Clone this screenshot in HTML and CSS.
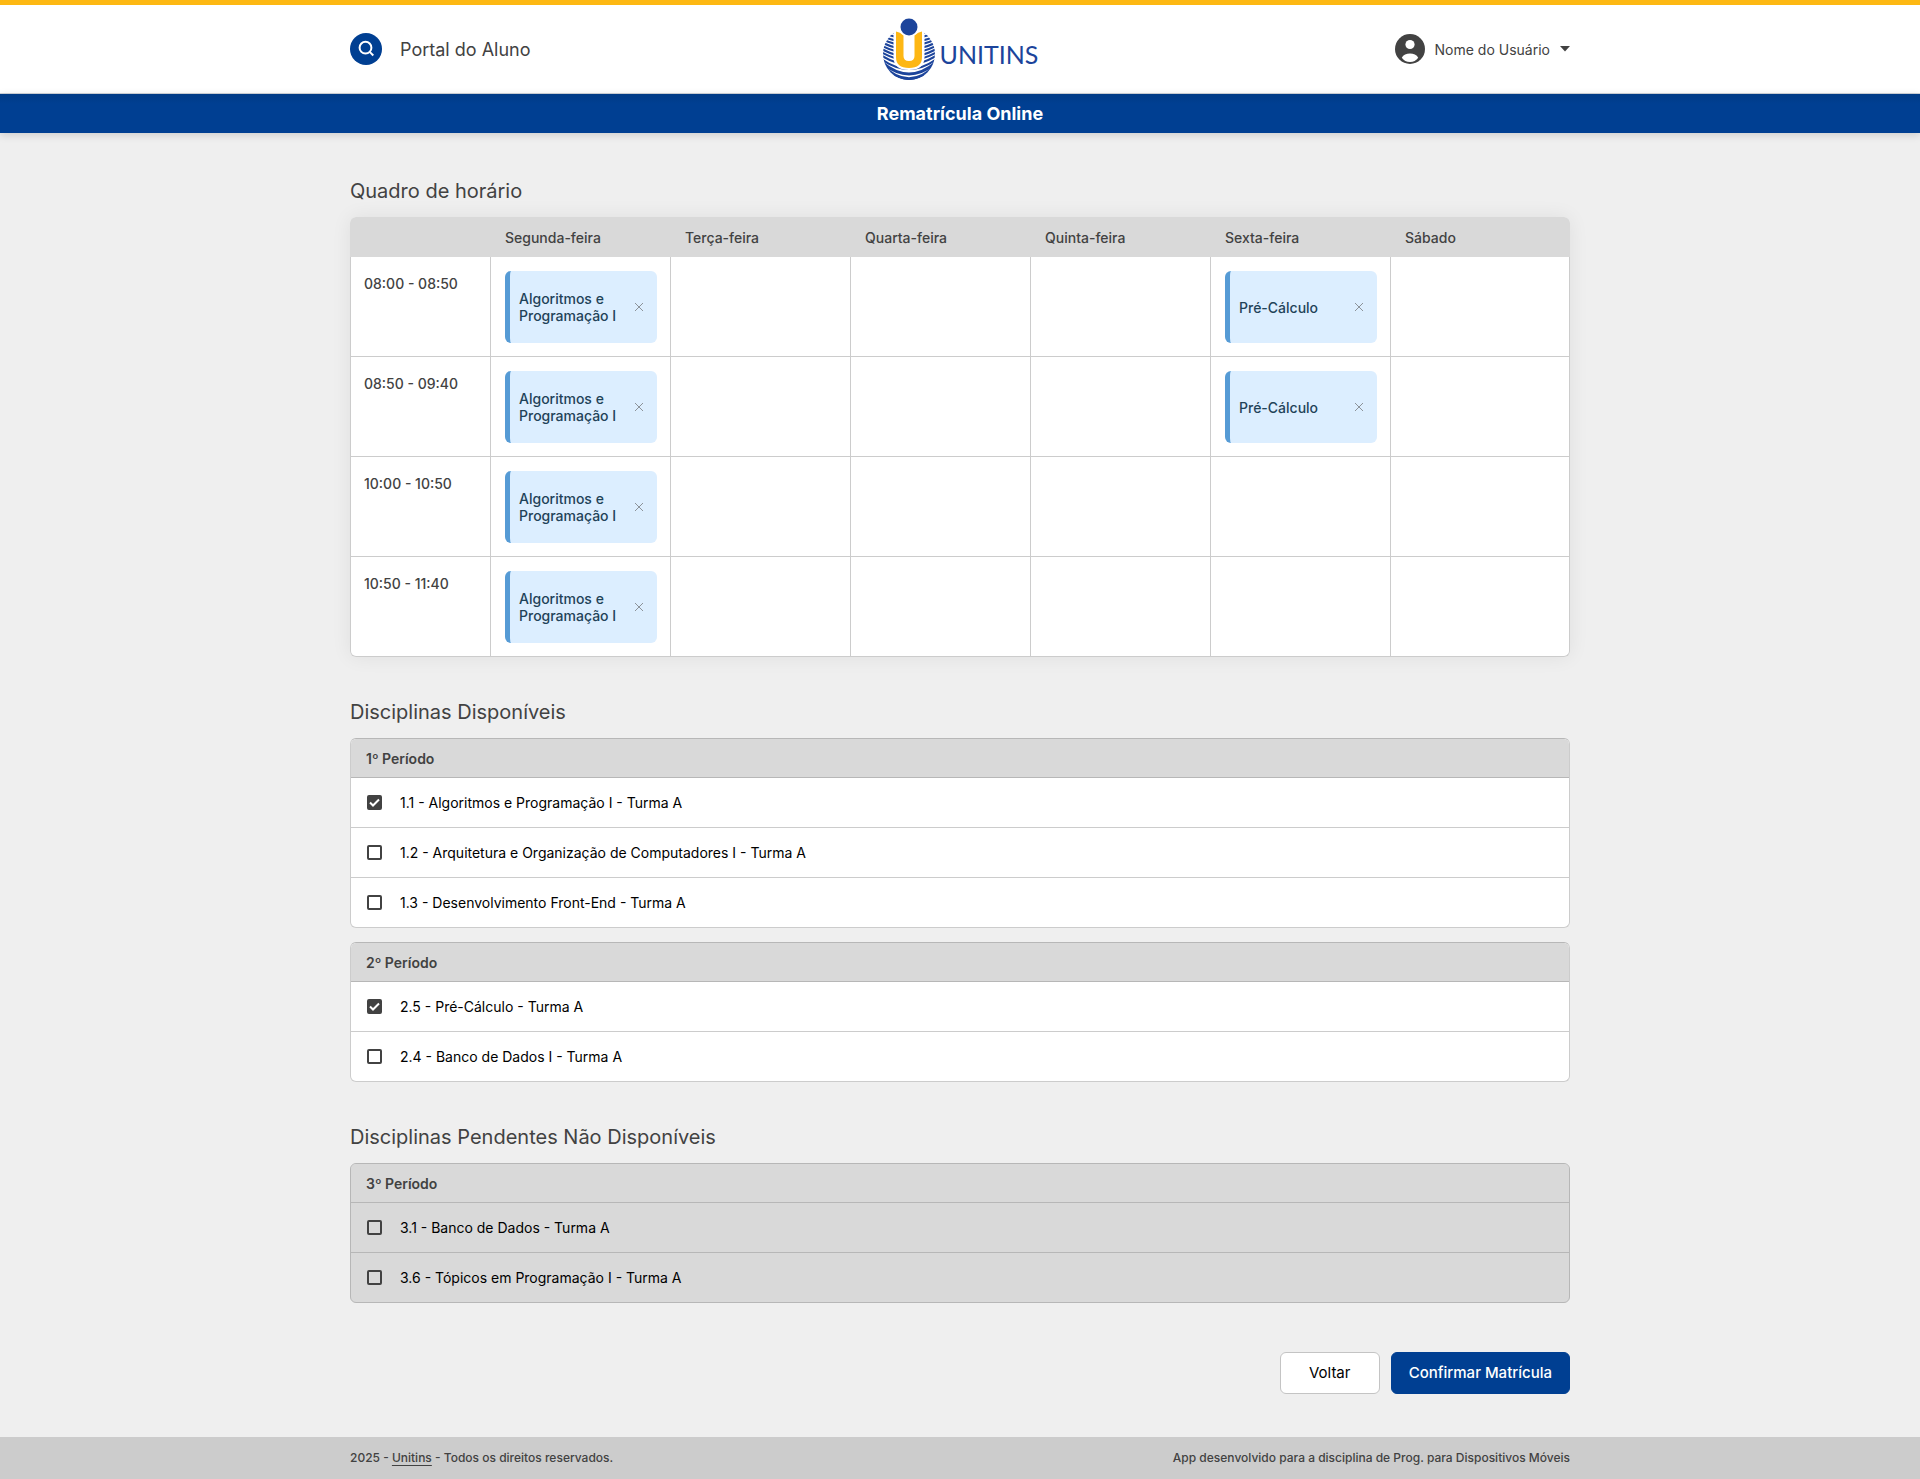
FILE: index.html
```html
<!DOCTYPE html>
<html lang="pt-BR">
<head>
<meta charset="utf-8">
<meta name="viewport" content="width=device-width, initial-scale=1">
<title>Rematrícula Online - Portal do Aluno</title>
<link rel="stylesheet" href="styles.css">
</head>
<body>
<svg class="sprite" aria-hidden="true">
  <symbol id="close" viewBox="0 0 8 8"><path d="M0 0L8 8M8 0L0 8" fill="none" stroke="currentColor"/></symbol>
</svg>

<header class="topbar">
  <div class="container topbar-inner">
    <div class="portal">
      <button class="search" type="button" aria-label="Buscar">
        <svg width="32" height="32" viewBox="0 0 32 32" fill="none" stroke="#fff" stroke-width="2"><circle cx="15.500" cy="14.700" r="5.900"/><path d="M19.700 18.900L23.300 22.500"/></svg>
      </button>
      <span class="portal-name">Portal do Aluno</span>
    </div>
    <a class="logo" href="#" aria-label="Unitins">
      <svg width="54" height="64" viewBox="0 0 54 64">
        <defs><clipPath id="globe"><circle cx="27" cy="36" r="26"/></clipPath></defs>
        <g clip-path="url(#globe)" fill="none" stroke="#1c449b" stroke-width="2.100">
          <path d="M-2 7Q27 19 56 7M-2 10.300Q27 23 56 10.300M-2 13.600Q27 27 56 13.600M-2 16.900Q27 31 56 16.900M-2 20.200Q27 35 56 20.200M-2 23.500Q27 39 56 23.500M-2 26.800Q27 43 56 26.800M-2 30.100Q27 47 56 30.100M-2 33.400Q27 51 56 33.400M-2 36.700Q27 56 56 36.700M-2 40Q27 62 56 40"/>
          <path d="M-2 42.500Q27 69.500 56 42.500M-2 45Q27 76.500 56 45" stroke-width="2.800"/>
          <path d="M4 53Q27 67.500 50 53L48 64H6Z" fill="#1c449b" stroke="none"/>
        </g>
        <path d="M11.500 7V39Q11.500 52 27 52T42.500 39V7Z" fill="#fff"/>
        <path d="M14 13.500Q18 14 21.500 17.500V38Q21.500 43 27 43T32.500 38V17.500Q36 14 40 13.500V39Q40 50 27 50T14 39Z" fill="#fdb714"/>
        <circle cx="27" cy="9" r="10" fill="#fff"/>
        <circle cx="27" cy="9" r="8.500" fill="#1c449b"/>
      </svg>
      <span class="logo-name">UNITINS</span>
    </a>
    <button class="user" type="button">
      <svg width="30" height="30" viewBox="0 0 30 30"><circle cx="15" cy="15" r="15" fill="#424242"/><circle cx="15" cy="10.500" r="4.600" fill="#fff"/><path d="M6.800 23.700C8.200 20.700 11.500 19.600 15 19.600S21.800 20.700 23.200 23.700C21.300 26.400 18.500 28 15 28S8.700 26.400 6.800 23.700Z" fill="#fff"/></svg>
      <span>Nome do Usuário</span>
      <svg width="10" height="6" viewBox="0 0 10 6"><path d="M0 0H10L5 5.500Z" fill="#424242"/></svg>
    </button>
  </div>
</header>
<div class="titlebar"><h1>Rematrícula Online</h1></div>

<main class="container content">
  <section>
    <h2>Quadro de horário</h2>
    <table class="schedule">
      <thead>
        <tr><td></td><th scope="col">Segunda-feira</th><th scope="col">Terça-feira</th><th scope="col">Quarta-feira</th><th scope="col">Quinta-feira</th><th scope="col">Sexta-feira</th><th scope="col">Sábado</th></tr>
      </thead>
      <tbody>
        <tr>
          <th scope="row">08:00 - 08:50</th>
          <td><div class="class-card"><span>Algoritmos e Programação I</span><button type="button" aria-label="Remover"><svg width="8" height="8"><use href="#close"/></svg></button></div></td>
          <td></td><td></td><td></td>
          <td><div class="class-card"><span>Pré-Cálculo</span><button type="button" aria-label="Remover"><svg width="8" height="8"><use href="#close"/></svg></button></div></td>
          <td></td>
        </tr>
        <tr>
          <th scope="row">08:50 - 09:40</th>
          <td><div class="class-card"><span>Algoritmos e Programação I</span><button type="button" aria-label="Remover"><svg width="8" height="8"><use href="#close"/></svg></button></div></td>
          <td></td><td></td><td></td>
          <td><div class="class-card"><span>Pré-Cálculo</span><button type="button" aria-label="Remover"><svg width="8" height="8"><use href="#close"/></svg></button></div></td>
          <td></td>
        </tr>
        <tr>
          <th scope="row">10:00 - 10:50</th>
          <td><div class="class-card"><span>Algoritmos e Programação I</span><button type="button" aria-label="Remover"><svg width="8" height="8"><use href="#close"/></svg></button></div></td>
          <td></td><td></td><td></td><td></td><td></td>
        </tr>
        <tr>
          <th scope="row">10:50 - 11:40</th>
          <td><div class="class-card"><span>Algoritmos e Programação I</span><button type="button" aria-label="Remover"><svg width="8" height="8"><use href="#close"/></svg></button></div></td>
          <td></td><td></td><td></td><td></td><td></td>
        </tr>
      </tbody>
    </table>
  </section>

  <section>
    <h2>Disciplinas Disponíveis</h2>
    <div class="periods">
      <div class="period">
        <h3>1º Período</h3>
        <label><input type="checkbox" checked>1.1 - Algoritmos e Programação I - Turma A</label>
        <label><input type="checkbox">1.2 - Arquitetura e Organização de Computadores I - Turma A</label>
        <label><input type="checkbox">1.3 - Desenvolvimento Front-End - Turma A</label>
      </div>
      <div class="period">
        <h3>2º Período</h3>
        <label><input type="checkbox" checked>2.5 - Pré-Cálculo - Turma A</label>
        <label><input type="checkbox">2.4 - Banco de Dados I - Turma A</label>
      </div>
    </div>
  </section>

  <section>
    <h2>Disciplinas Pendentes Não Disponíveis</h2>
    <div class="periods">
      <div class="period unavailable">
        <h3>3º Período</h3>
        <label><input type="checkbox" disabled>3.1 - Banco de Dados - Turma A</label>
        <label><input type="checkbox" disabled>3.6 - Tópicos em Programação I - Turma A</label>
      </div>
    </div>
  </section>

  <div class="actions">
    <button class="btn" type="button">Voltar</button>
    <button class="btn btn-primary" type="submit">Confirmar Matrícula</button>
  </div>
</main>

<footer class="footer">
  <div class="container footer-inner">
    <span>2025 - <a href="#">Unitins</a> - Todos os direitos reservados.</span>
    <span>App desenvolvido para a disciplina de Prog. para Dispositivos Móveis</span>
  </div>
</footer>
</body>
</html>
```
FILE: styles.css
```css
* { box-sizing: border-box; }

body {
  margin: 0;
  min-height: 100vh;
  display: flex;
  flex-direction: column;
  background: #efefef;
  color: #424242;
  font-family: Inter, "Liberation Sans", sans-serif;
  font-size: 14px;
  line-height: 18px;
}

button {
  font: inherit;
  color: inherit;
  background: none;
  border: 0;
  padding: 0;
  cursor: pointer;
}

h1, h2, h3 { margin: 0; }
svg { display: block; flex: none; }
.sprite { position: absolute; width: 0; height: 0; }

.container {
  width: 100%;
  max-width: 1260px;
  margin: 0 auto;
  padding: 0 20px;
}

/* Header */
.topbar {
  background: #fff;
  border-top: 5px solid #fdb813;
  border-bottom: 1px solid #d0d4da;
}
.topbar-inner {
  display: grid;
  grid-template-columns: 1fr auto 1fr;
  align-items: center;
  height: 88px;
}
.portal { display: flex; align-items: center; gap: 18px; }
.search { border-radius: 50%; background: #003f92; }
.portal-name { padding-top: 2px; font-size: 18px; line-height: 24px; }
.logo {
  display: flex;
  align-items: center;
  gap: 4px;
  padding-top: 2px;
  color: #1c449b;
  text-decoration: none;
}
.logo-name { font-family: Lato, sans-serif; font-size: 25px; line-height: 32px; padding-top: 8px; }
.user { display: flex; align-items: center; gap: 10px; justify-self: end; }
.user span { padding-top: 2px; }

.titlebar {
  background: linear-gradient(#003b86, #003f92 10px);
  box-shadow: 0 2px 8px rgba(0, 0, 0, .15);
  text-align: center;
}
.titlebar h1 {
  padding-top: 1px;
  color: #fff;
  font-size: 18px;
  font-weight: 700;
  line-height: 38px;
}

/* Content */
.content {
  flex: 1;
  padding-top: 46px;
  padding-bottom: 43px;
}
section { margin-bottom: 43px; }
h2 {
  font-size: 20px;
  font-weight: 400;
  line-height: 24px;
  margin-bottom: 14px;
}

.schedule {
  width: 100%;
  table-layout: fixed;
  border-collapse: separate;
  border-spacing: 0;
  border-radius: 6px;
  background: #fff;
  box-shadow: 0 0 20px rgba(0, 0, 0, .07);
}
.schedule th { font-weight: 500; text-align: left; }
.schedule thead td,
.schedule thead th { width: 180px; height: 40px; padding: 2px 14px 0; background: #d9d9d9; }
.schedule thead td:first-child { width: 141px; border-top-left-radius: 6px; }
.schedule thead th:last-child { width: auto; border-top-right-radius: 6px; }
.schedule tbody th,
.schedule tbody td {
  height: 100px;
  padding: 14px 13px 13px 14px;
  border-right: 1px solid #cccccc;
  border-bottom: 1px solid #cccccc;
}
.schedule tbody th {
  padding: 18px 13px;
  border-left: 1px solid #cccccc;
  vertical-align: top;
}
.schedule tbody tr:last-child th { border-bottom-left-radius: 6px; }
.schedule tbody tr:last-child td:last-child { border-bottom-right-radius: 6px; }

.class-card {
  display: flex;
  align-items: center;
  justify-content: space-between;
  height: 72px;
  padding: 0 14px 0 9px;
  border-left: 5px solid #569bd5;
  border-radius: 6px;
  background: #dceeff;
  color: #1f4359;
  font-weight: 500;
  line-height: 17px;
}
.class-card button { color: #8c9299; }

.periods { display: grid; gap: 14px; }
.period {
  border: 1px solid #cccccc;
  border-top-color: #b7b7b7;
  border-radius: 6px;
  background: #fff;
  overflow: hidden;
}
.period h3 {
  padding: 1px 15px 0;
  background: #d9d9d9;
  border-bottom: 1px solid #b7b7b7;
  font-size: 14px;
  font-weight: 600;
  line-height: 37px;
}
.period label {
  display: flex;
  align-items: center;
  gap: 18px;
  height: 50px;
  padding: 0 16px;
  border-bottom: 1px solid #cccccc;
  color: #000;
}
.period label:last-child { height: 49px; border-bottom: 0; }
.period input {
  appearance: none;
  flex: none;
  width: 15px;
  height: 15px;
  margin: 0;
  border: 2px solid #424242;
  border-radius: 2px;
}
.period input:checked {
  background: #424242 url("data:image/svg+xml,%3Csvg xmlns='http://www.w3.org/2000/svg' viewBox='0 0 11 11'%3E%3Cpath d='M1 5.500L4 8.500L10 2.500' fill='none' stroke='white' stroke-width='2'/%3E%3C/svg%3E") center / 11px no-repeat;
}
.unavailable { background: #d9d9d9; border-color: #b7b7b7; }
.unavailable label { border-color: #b7b7b7; }

.actions {
  display: flex;
  justify-content: flex-end;
  gap: 11px;
  padding-top: 6px;
}
.btn {
  min-width: 100px;
  height: 42px;
  padding: 0 17px;
  border: 1px solid #c4c4c4;
  border-radius: 6px;
  background: #fff;
  color: #000;
  font-size: 15px;
}
.btn-primary {
  background: #003f92;
  border-color: #003f92;
  color: #fff;
  font-weight: 500;
}

/* Footer */
.footer { background: #cccccc; font-size: 12px; font-weight: 500; }
.footer-inner {
  display: flex;
  align-items: center;
  justify-content: space-between;
  gap: 20px;
  min-height: 42px;
}
.footer a { color: inherit; text-underline-offset: 3px; }
```
